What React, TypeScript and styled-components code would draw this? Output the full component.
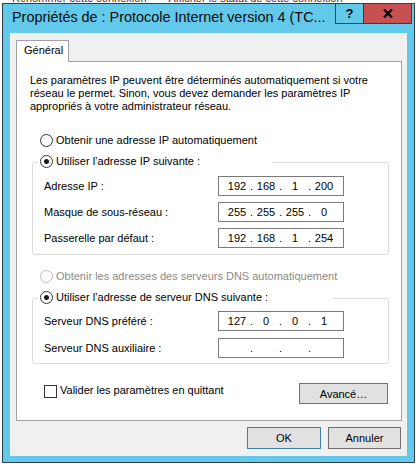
import React from "react";
import styled, { createGlobalStyle } from "styled-components";

const GlobalStyle = createGlobalStyle`
  html, body {
    margin: 0;
    padding: 0;
    background: #ffffff;
  }
  body {
    width: 418px;
    height: 467px;
    overflow: hidden;
    font-family: "Liberation Sans", Arial, sans-serif;
    font-size: 11px;
    color: #000;
  }
  * { box-sizing: border-box; }
`;

const ParentStrip = styled.div`
  height: 3px;
  overflow: hidden;
  display: flex;
  align-items: flex-end;
  gap: 22px;
  padding-left: 12px;
  color: #5b1f35;
  font-size: 11px;
  line-height: 10px;
  white-space: nowrap;
`;

const Window = styled.div`
  margin-left: 2px;
  width: 413px;
  height: 460px;
  border: 1px solid #2f3f4d;
  background: #63c9ea;
  display: flex;
  flex-direction: column;
`;

const TitleBar = styled.div`
  height: 29px;
  display: flex;
  align-items: flex-start;
  padding-left: 9px;
`;

const TitleText = styled.div`
  flex: 1;
  margin-top: 3px;
  font-size: 14.4px;
  line-height: 20px;
  white-space: nowrap;
  color: #0a0a0a;
`;

const CaptionButtons = styled.div`
  display: flex;
  margin-top: -1px;
  margin-right: 2px;
`;

const CaptionButton = styled.div<{ $close?: boolean }>`
  width: ${(p) => (p.$close ? 49 : 29)}px;
  height: 21px;
  margin-left: ${(p) => (p.$close ? -1 : 0)}px;
  border: 1px solid #2f3f4d;
  background: ${(p) => (p.$close ? "#c75050" : "#63c9ea")};
  display: flex;
  align-items: center;
  justify-content: center;
  font-family: "Liberation Sans", Arial, sans-serif;
  font-weight: bold;
  font-size: 13px;
  color: #000;
`;

const Client = styled.div`
  flex: 1;
  margin: 0 7px 6px 7px;
  background: #f0f0f0;
  padding: 7px 5px 0 6px;
  display: flex;
  flex-direction: column;
`;

const TabStrip = styled.div`
  display: flex;
`;

const Tab = styled.div`
  position: relative;
  z-index: 1;
  width: 53px;
  height: 22px;
  margin-bottom: -1px;
  padding-left: 7px;
  border: 1px solid #a0a0a0;
  border-bottom: none;
  background: #fff;
  line-height: 19px;
`;

const Panel = styled.div`
  height: 360px;
  border: 1px solid #a0a0a0;
  background: #fff;
  padding-top: 12px;
  display: flex;
  flex-direction: column;
`;

const Description = styled.p`
  margin: 0;
  padding-left: 13px;
  line-height: 13px;
`;

const RadioOption = styled.label<{ $disabled?: boolean; $top?: number; $left?: number }>`
  display: flex;
  align-items: center;
  gap: 3px;
  height: 16px;
  margin-top: ${(p) => p.$top ?? 0}px;
  margin-left: ${(p) => p.$left ?? 0}px;
  color: ${(p) => (p.$disabled ? "#8a8a8a" : "#000")};
  white-space: nowrap;
`;

const RadioCircle = styled.span<{ $checked?: boolean; $disabled?: boolean }>`
  width: 13px;
  height: 13px;
  border-radius: 50%;
  border: 1px solid ${(p) => (p.$disabled ? "#bcbcbc" : "#333333")};
  background: #fff;
  display: flex;
  align-items: center;
  justify-content: center;
  flex: none;
  &::after {
    content: "";
    display: ${(p) => (p.$checked ? "block" : "none")};
    width: 5px;
    height: 5px;
    border-radius: 50%;
    background: #1a1a1a;
  }
`;

const GroupBox = styled.fieldset<{ $padTop: number; $padBottom: number }>`
  margin: 5px 12px 0 15px;
  min-width: 0;
  border: 1px solid #dcdcdc;
  border-radius: 3px;
  padding: ${(p) => p.$padTop}px 0 ${(p) => p.$padBottom}px 5px;
`;

const GroupLegend = styled.legend<{ $w: number }>`
  width: ${(p) => p.$w}px;
  padding: 0 0 3px 2px;
`;

const FieldGrid = styled.div<{ $gap: number }>`
  display: grid;
  grid-template-columns: 174px 126px;
  grid-auto-rows: 20px;
  row-gap: ${(p) => p.$gap}px;
  margin-left: 6px;
  align-items: center;
`;

const FieldLabel = styled.span`
  white-space: nowrap;
`;

const IpBox = styled.div`
  height: 20px;
  border: 1px solid #7a7a7a;
  background: #fff;
  display: flex;
  align-items: center;
  padding-left: 6px;
`;

const IpSegment = styled.span`
  width: 24px;
  text-align: center;
`;

const IpDot = styled.span`
  width: 5px;
  text-align: center;
`;

const BottomRow = styled.div`
  display: flex;
  justify-content: space-between;
  align-items: flex-start;
  margin-top: 19px;
  padding-left: 27px;
  padding-right: 13px;
`;

const CheckOption = styled.label`
  display: flex;
  align-items: center;
  gap: 3px;
  margin-top: -1px;
  height: 16px;
  white-space: nowrap;
`;

const CheckBox = styled.span`
  width: 13px;
  height: 13px;
  border: 1px solid #333;
  background: #fff;
  margin-top: 2px;
`;

const PushButton = styled.div<{ $w: number; $h: number; $default?: boolean }>`
  width: ${(p) => p.$w}px;
  height: ${(p) => p.$h}px;
  border: 1px solid ${(p) => (p.$default ? "#3c7fb1" : "#707070")};
  background: #e1e1e1;
  display: flex;
  align-items: center;
  justify-content: center;
`;

const DialogButtons = styled.div`
  display: flex;
  justify-content: flex-end;
  gap: 7px;
  margin-top: 6px;
  padding-right: 1px;
`;

const IpField = ({ parts }: { parts: string[] }) => (
  <IpBox>
    {parts.map((p, i) => (
      <React.Fragment key={i}>
        {i > 0 && <IpDot>.</IpDot>}
        <IpSegment>{p}</IpSegment>
      </React.Fragment>
    ))}
  </IpBox>
);

const CloseGlyph = () => (
  <svg width="10" height="9" viewBox="0 0 10 9">
    <path d="M1 0.5 L9 8.5 M9 0.5 L1 8.5" stroke="#000" strokeWidth="2.2" />
  </svg>
);

export default function App() {
  return (
    <>
      <GlobalStyle />
      <ParentStrip>
        <span>Renommer cette connexion</span>
        <span>Afficher le statut de cette connexion</span>
      </ParentStrip>
      <Window>
        <TitleBar>
          <TitleText>Propriétés de : Protocole Internet version 4 (TC...</TitleText>
          <CaptionButtons>
            <CaptionButton>?</CaptionButton>
            <CaptionButton $close>
              <CloseGlyph />
            </CaptionButton>
          </CaptionButtons>
        </TitleBar>
        <Client>
          <TabStrip>
            <Tab>Général</Tab>
          </TabStrip>
          <Panel>
            <Description>
              Les paramètres IP peuvent être déterminés automatiquement si votre
              <br />
              réseau le permet. Sinon, vous devez demander les paramètres IP
              <br />
              appropriés à votre administrateur réseau.
            </Description>
            <RadioOption $top={19} $left={23}>
              <RadioCircle />
              Obtenir une adresse IP automatiquement
            </RadioOption>
            <GroupBox $padTop={4} $padBottom={6}>
              <GroupLegend $w={235}>
                <RadioOption>
                  <RadioCircle $checked />
                  Utiliser l’adresse IP suivante :
                </RadioOption>
              </GroupLegend>
              <FieldGrid $gap={6}>
                <FieldLabel>Adresse IP :</FieldLabel>
                <IpField parts={["192", "168", "1", "200"]} />
                <FieldLabel>Masque de sous-réseau :</FieldLabel>
                <IpField parts={["255", "255", "255", "0"]} />
                <FieldLabel>Passerelle par défaut :</FieldLabel>
                <IpField parts={["192", "168", "1", "254"]} />
              </FieldGrid>
            </GroupBox>
            <RadioOption $top={13} $left={23} $disabled>
              <RadioCircle $disabled />
              Obtenir les adresses des serveurs DNS automatiquement
            </RadioOption>
            <GroupBox $padTop={3} $padBottom={5}>
              <GroupLegend $w={295}>
                <RadioOption>
                  <RadioCircle $checked />
                  Utiliser l’adresse de serveur DNS suivante :
                </RadioOption>
              </GroupLegend>
              <FieldGrid $gap={7}>
                <FieldLabel>Serveur DNS préféré :</FieldLabel>
                <IpField parts={["127", "0", "0", "1"]} />
                <FieldLabel>Serveur DNS auxiliaire :</FieldLabel>
                <IpField parts={["", "", "", ""]} />
              </FieldGrid>
            </GroupBox>
            <BottomRow>
              <CheckOption>
                <CheckBox />
                Valider les paramètres en quittant
              </CheckOption>
              <PushButton $w={89} $h={21}>Avancé…</PushButton>
            </BottomRow>
          </Panel>
          <DialogButtons>
            <PushButton $w={74} $h={22} $default>OK</PushButton>
            <PushButton $w={73} $h={22}>Annuler</PushButton>
          </DialogButtons>
        </Client>
      </Window>
    </>
  );
}
